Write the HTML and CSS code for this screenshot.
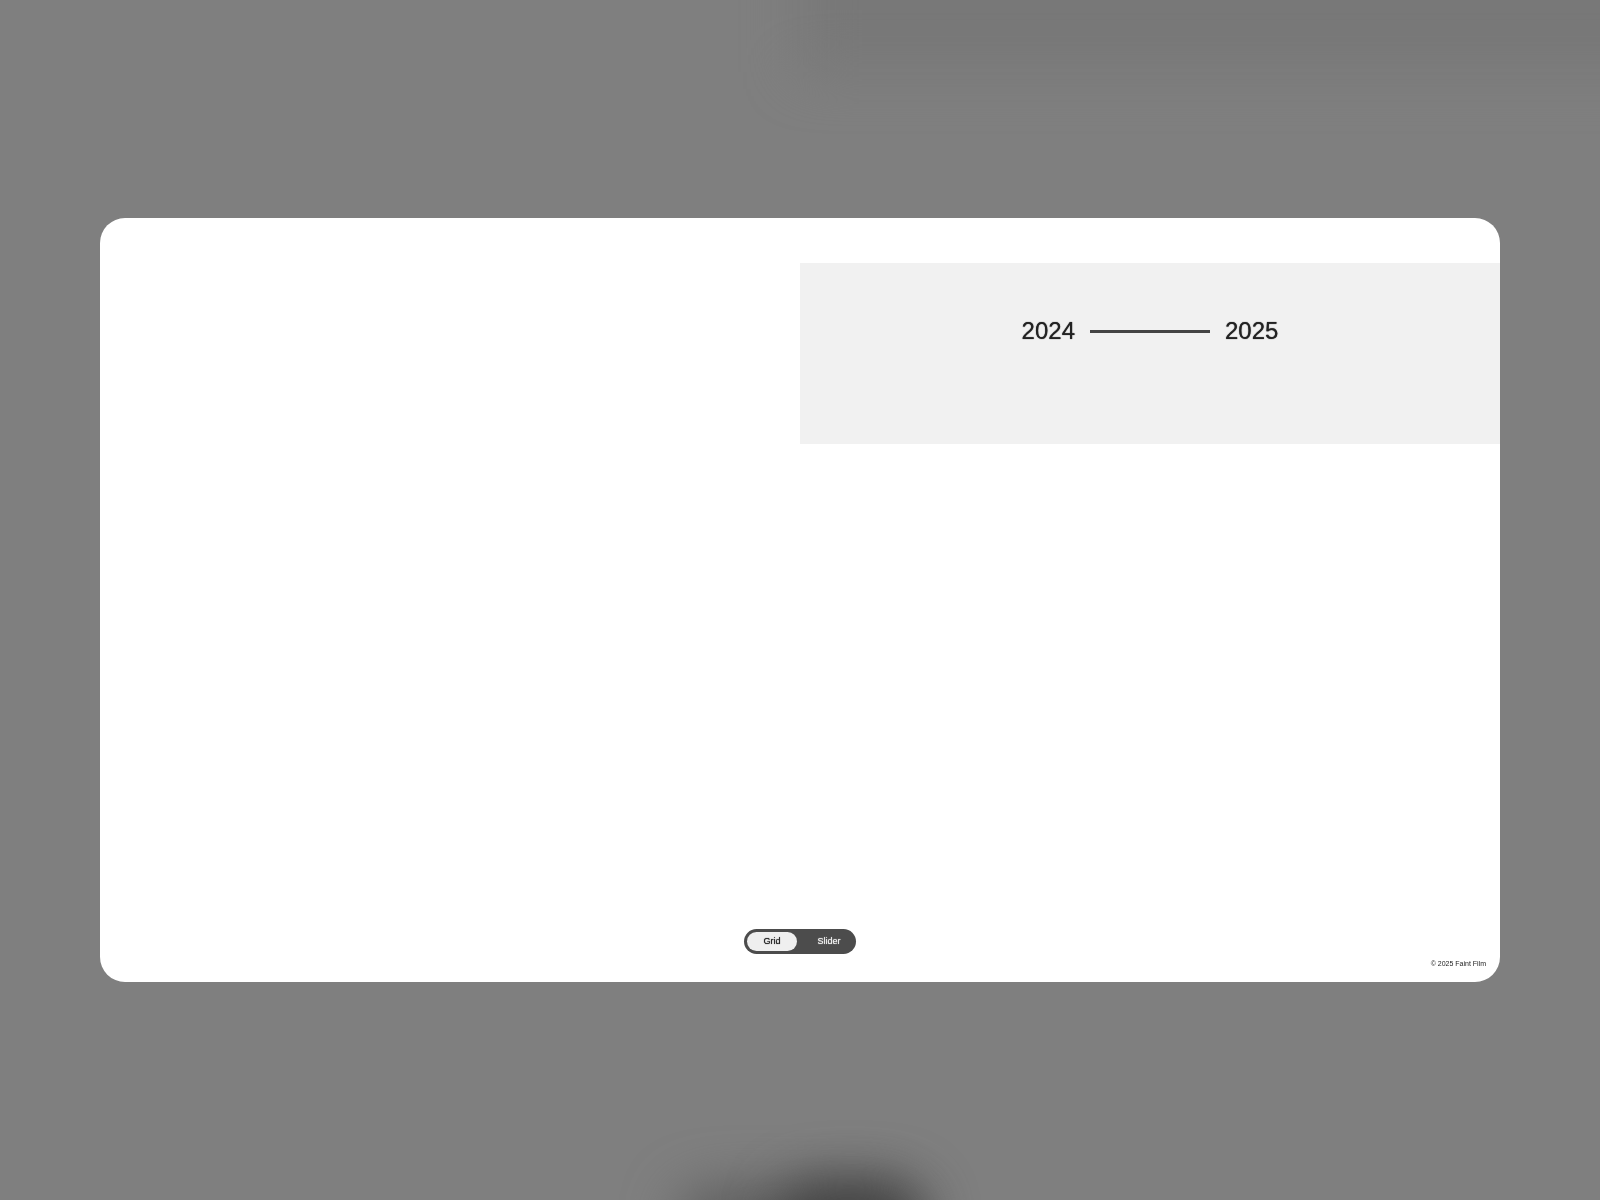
FILE: index.html
```html
<!DOCTYPE html>
<html lang="en">
<head>
  <meta charset="utf-8">
  <meta name="viewport" content="width=device-width, initial-scale=1">
  <title>Faint Film</title>
  <link rel="stylesheet" href="styles.css">
</head>
<body>
  <div class="backdrop" aria-hidden="true">
    <div class="glow glow-panel"></div>
    <div class="glow glow-toggle"></div>
    <div class="glow glow-toggle-core"></div>
  </div>
  <main class="card">
    <section class="period" aria-label="Period">
      <span class="year">2024</span>
      <span class="period-line"></span>
      <span class="year">2025</span>
    </section>
    <footer class="footer">
      <div class="toggle" role="group" aria-label="View">
        <button class="toggle-option is-active" type="button" aria-pressed="true">Grid</button>
        <button class="toggle-option" type="button" aria-pressed="false">Slider</button>
      </div>
      <small class="copyright">© 2025 Faint Film</small>
    </footer>
  </main>
</body>
</html>
```

FILE: styles.css
```css
* {
  box-sizing: border-box;
}

body {
  margin: 0;
  min-height: 100vh;
  padding: 0 100px;
  display: flex;
  align-items: center;
  background: #7f7f7f;
  color: #222;
  font-family: "Liberation Sans", Arial, sans-serif;
}

/* Enlarged, out-of-focus echo of the card behind it */
.backdrop {
  position: fixed;
  inset: 0;
  z-index: -1;
  overflow: hidden;
}

.glow {
  position: absolute;
}

.glow-panel {
  top: -200px;
  left: 50%;
  right: -200px;
  height: 272px;
  background: #787878;
  filter: blur(26px);
}

.glow-toggle {
  left: 50%;
  bottom: -56px;
  width: 240px;
  height: 64px;
  margin-left: -120px;
  border-radius: 32px;
  background: #575757;
  filter: blur(28px);
}

.glow-toggle-core {
  left: 50%;
  bottom: -70px;
  width: 144px;
  height: 88px;
  margin-left: -22px;
  border-radius: 40px;
  background: #444;
  filter: blur(26px);
}

.card {
  flex: 1;
  aspect-ratio: 1400 / 764;
  padding-top: 45px;
  display: flex;
  flex-direction: column;
  overflow: hidden;
  border-radius: 25px;
  background: #fff;
}

.period {
  width: 50%;
  margin-left: auto;
  padding: 54px 0 99px;
  display: flex;
  align-items: center;
  justify-content: center;
  gap: 15px;
  background: #f1f1f1;
}

.year {
  font-size: 24px;
  line-height: 28px;
  text-shadow: 0 0 1px #222;
}

.period-line {
  width: 120px;
  height: 3px;
  background: #444;
}

.footer {
  margin-top: auto;
  padding: 0 14px 13px;
  display: grid;
  grid-template-columns: 1fr auto 1fr;
}

.toggle {
  grid-column: 2;
  width: 112px;
  height: 25px;
  margin-bottom: 15px;
  padding: 3px;
  display: flex;
  justify-content: space-between;
  border-radius: 13px;
  background: #4c4c4c;
}

.toggle-option {
  width: 48px;
  padding: 0;
  border: 0;
  border-radius: 10px;
  background: none;
  color: #f1f1f1;
  font: 9px/19px "Liberation Sans", Arial, sans-serif;
  text-shadow: 0 0 1px currentColor;
  cursor: pointer;
}

.toggle-option.is-active {
  width: 50px;
  background: #efefef;
  color: #222;
}

.copyright {
  align-self: end;
  justify-self: end;
  font-size: 7px;
  line-height: 10px;
}
```
